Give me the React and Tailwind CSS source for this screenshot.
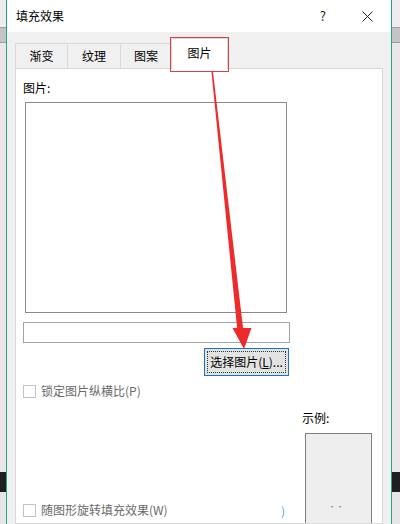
import React from "react";

const tabs = ["渐变", "纹理", "图案", "图片"];

const Strip = ({ className }) => (
  <div className={`flex h-full flex-col ${className}`}>
    <div className="h-[27px] bg-[#ededed]" />
    <div className="h-[16px] border-y border-[#9d9d9d] bg-[#c4c4c4]" />
    <div className="h-[429px] bg-[#e9e7e8]" />
    <div className="h-[20px] bg-[#1f1f1f]" />
    <div className="flex-1 bg-[#e6e6e6]" />
  </div>
);

const Checkbox = ({ label }) => (
  <div className="flex h-[14px] items-center gap-[5px]">
    <div className="h-[13px] w-[13px] border border-[#c4c4c4] bg-white" />
    <span className="text-[12px] leading-[14px] text-[#6a6a6a]">{label}</span>
  </div>
);

const App = () => {
  return (
    <div
      className="relative flex h-[524px] w-[400px] overflow-hidden bg-white"
      style={{ fontFamily: '"Noto Sans CJK SC", "Noto Sans", sans-serif' }}
    >
      <Strip className="w-[6px]" />

      <div className="flex w-[386px] flex-col border-x border-[#2f9d8c] bg-[#f0f0f0]">
        {/* title bar */}
        <div className="flex h-[32px] shrink-0 items-center bg-white pl-[9px]">
          <span className="text-[12px] leading-[16px] text-black">填充效果</span>
          <span className="ml-auto text-[13px] leading-[16px] text-[#222]">?</span>
          <svg width="11" height="11" viewBox="0 0 11 11" className="ml-[36px] mr-[18px]">
            <path d="M0.5 0.5 L10.5 10.5 M10.5 0.5 L0.5 10.5" stroke="#222" strokeWidth="1" />
          </svg>
        </div>

        {/* tabs */}
        <div className="flex h-[36px] shrink-0 items-end pl-[8px]">
          {tabs.map((t, i) =>
            i === 3 ? (
              <div
                key={t}
                className="relative z-10 -mb-px flex h-[31px] w-[57px] items-center justify-center border-x border-t border-[#d9d9d9] bg-white pb-[2px]"
              >
                <span className="text-[12px] leading-[16px] text-black">{t}</span>
                <div className="absolute -left-[2px] -right-[2px] -top-[2px] bottom-[-3px] border-[1.5px] border-[#d5404a]" />
              </div>
            ) : (
              <div
                key={t}
                className={`flex h-[25px] items-center justify-center border-t border-l border-[#dadada] bg-[#f0f0f0] ${
                  i === 1 ? "w-[53px]" : i === 0 ? "w-[52px]" : "w-[51px]"
                }`}
              >
                <span className="text-[12px] leading-[16px] text-black">{t}</span>
              </div>
            )
          )}
        </div>

        {/* panel */}
        <div className="ml-[8px] flex w-[368px] flex-1 flex-col overflow-hidden border border-[#dadada] bg-white pl-[7px] pt-[11px]">
          <span className="text-[12px] leading-[16px] text-black">图片:</span>
          <div className="ml-[2px] mt-[6px] h-[211px] w-[262px] shrink-0 border border-[#8a8a8a] bg-white" />
          <div className="mt-[9px] h-[21px] w-[267px] shrink-0 border border-[#a3a3a3] bg-white" />
          <div className="ml-[181px] mt-[5px] flex h-[28px] w-[85px] shrink-0 items-center justify-center border border-[#1a73c9] bg-[#e3e3e3] p-[2px]">
            <div className="flex h-full w-full items-center justify-center border border-dotted border-[#333]">
              <span className="text-[12px] leading-[16px] text-black">
                选择图片(<span className="underline">L</span>)...
              </span>
            </div>
          </div>
          <div className="mt-[8px]">
            <Checkbox label="锁定图片纵横比(P)" />
          </div>
          <div className="flex">
            <div className="w-[279px] pt-[105px]">
              <Checkbox label="随图形旋转填充效果(W)" />
            </div>
            <div className="flex flex-col pt-[12px]">
              <span className="text-[12px] leading-[16px] text-black">示例:</span>
              <div className="relative ml-[3px] mt-[7px] h-[100px] w-[67px] border border-[#7e7e7e] bg-[#eeeeee]">
                <span className="absolute left-[22px] top-[69px] text-[8px] leading-[8px] text-[#3b8fd9]">··</span>
              </div>
            </div>
          </div>
        </div>
      </div>

      <Strip className="w-[8px]" />

      {/* stray glyph near bottom */}
      <span className="absolute left-[281px] top-[503px] text-[12px] leading-[16px] text-[#5aa0e0]">)</span>

      {/* red annotation arrow */}
      <svg className="pointer-events-none absolute left-0 top-0" width="400" height="524" viewBox="0 0 400 524">
        <polygon points="211.5,72 213,72 243.5,332 237.5,332" fill="#ee2a2a" />
        <polygon points="232.5,328 251.5,328 244,349" fill="#ee2a2a" />
      </svg>
    </div>
  );
};

export default App;
